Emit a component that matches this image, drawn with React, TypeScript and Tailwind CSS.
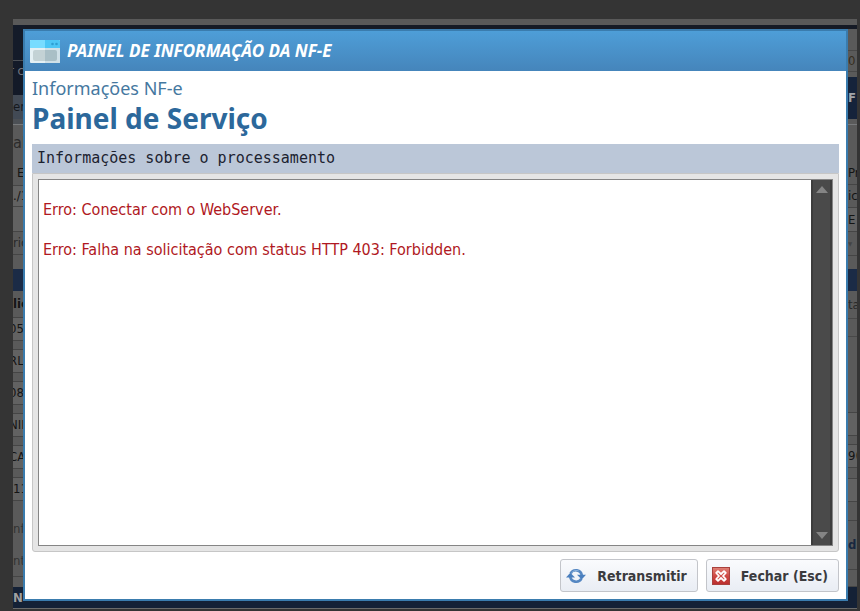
import type { ReactNode } from "react";
import clsx from "clsx";

type StripRow = { size: string; text?: string };

// What is left of the form at both sides of the open panel
const leftRows: StripRow[] = [
  { size: "h-9 bg-[#141b29] border-b border-[#4b4f55]" },
  { size: "h-[34px] bg-[#131a28] text-[#73777f] items-start pt-[2px] -indent-1", text: "r c" },
  { size: "h-6 bg-[#424a55] text-[#15181d]", text: "er" },
  { size: "h-[6px] bg-[#4c5055] border-b border-[#77797b]" },
  { size: "h-9 text-base text-[#2b2b2b]", text: "al" },
  { size: "h-6 pl-1", text: "E" },
  { size: "h-[22px] bg-[#626262] border-y border-[#454545]", text: "./1" },
  { size: "h-6 bg-[#626262]" },
  { size: "h-6 border-y border-[#454545] text-[#292929]", text: "ric" },
  { size: "h-[14px]" },
  { size: "h-[22px] bg-[#1b2b46]" },
  { size: "h-[26px] font-bold", text: "lic" },
  { size: "h-6 bg-[#626262] border-y border-[#454545] -indent-1", text: "05" },
  { size: "h-2" },
  { size: "h-6 bg-[#626262] border-y border-[#454545] -indent-1", text: "RL" },
  { size: "h-2" },
  { size: "h-6 bg-[#626262] border-y border-[#454545] -indent-1", text: "08" },
  { size: "h-2" },
  { size: "h-6 bg-[#626262] border-y border-[#454545] -indent-1", text: "NII" },
  { size: "h-2" },
  { size: "h-6 bg-[#626262] border-y border-[#454545] -indent-1", text: "CA" },
  { size: "h-2" },
  { size: "h-6 bg-[#626262] border-y border-[#454545]", text: "11" },
  { size: "h-3" },
  { size: "h-8 text-[#323232]", text: "nf" },
  { size: "h-8 border-b border-[#454545] text-[#323232]", text: "nt" },
  { size: "h-[10px]" },
  { size: "h-[21px] bg-[#142136] text-[#a0a0a0] font-bold", text: "N" },
];

const rightRows: StripRow[] = [
  { size: "h-1 bg-[#151a25]" },
  { size: "h-[22px] border-b border-[#484848]" },
  { size: "h-5 text-[#362d20]", text: "0" },
  { size: "h-[6px] border-t border-[#484848]" },
  { size: "h-[42px] bg-[#15233b] text-[#a2a5aa] font-bold", text: "F" },
  { size: "h-[6px] border-b border-[#77797b]" },
  { size: "h-9" },
  { size: "h-[23px]", text: "Pr" },
  { size: "h-6 border-y border-[#454545]", text: "ic" },
  { size: "h-6 bg-[#626262] border-b border-[#454545]", text: "E" },
  { size: "h-6 border-b border-[#454545] text-[#444444] text-[6px]", text: "▼" },
  { size: "h-[13px]" },
  { size: "h-[22px] bg-[#1b2b46]" },
  { size: "h-7 border-b border-[#484848] text-[#292929]", text: "ta" },
  { size: "h-[18px] border-b border-[#484848]" },
  { size: "h-[75px]" },
  { size: "h-6 bg-[#626262] border-y border-[#454545]" },
  { size: "h-2" },
  { size: "h-6 bg-[#626262] border-y border-[#454545]", text: "9(" },
  { size: "h-[10px]" },
  { size: "h-6 bg-[#626262] border-y border-[#454545]" },
  { size: "h-[18px]" },
  { size: "h-[50px] border-y border-[#454545] text-[#172740] font-bold", text: "d" },
  { size: "h-[17px] border-b border-[#454545]" },
  { size: "h-[21px] bg-[#142136]" },
];

function Strip({ rows, rowClassName }: { rows: StripRow[]; rowClassName?: string }) {
  return (
    <div className="w-3 overflow-hidden bg-[#5a5a5a]">
      {rows.map((row, i) => (
        <div key={i} className={clsx("flex items-center whitespace-nowrap", rowClassName, row.size)}>
          {row.text}
        </div>
      ))}
    </div>
  );
}

function WindowIcon() {
  return (
    <svg width="30" height="23" viewBox="0 0 30 23" aria-hidden="true">
      <rect width="30" height="23" rx="1" fill="#e4f0f4" />
      <path d="M1 0h14v8H0V1a1 1 0 0 1 1-1z" fill="#78dcff" />
      <path d="M15 0h14a1 1 0 0 1 1 1v7H15z" fill="#4cc6f5" />
      <path d="M15 8h15v14a1 1 0 0 1-1 1H15z" fill="#cfe0e7" />
      <path d="M5 10h10v11H5a2 2 0 0 1-2-2v-7a2 2 0 0 1 2-2z" fill="#c3d2d5" />
      <path d="M15 10h10a2 2 0 0 1 2 2v7a2 2 0 0 1-2 2H15z" fill="#a9bfc6" />
      <circle cx="22.5" cy="4" r="1.3" fill="#2d9fd2" />
      <circle cx="26.5" cy="4" r="1.3" fill="#2d9fd2" />
    </svg>
  );
}

function RefreshIcon() {
  return (
    <svg width="20" height="16" viewBox="0 0 20 16" className="shrink-0" aria-hidden="true">
      <g fill="none" stroke="#5587c2" strokeWidth="2.6">
        <path d="M4.6 5.4A6 6 0 0 1 15.8 7.5" />
        <path d="M15.4 10.6A6 6 0 0 1 4.2 8.5" />
      </g>
      <path d="M0 9.4L4.3 4.8L9 9.4z" fill="#4a7fbe" />
      <path d="M11 6.8H20L15.7 11.4z" fill="#4a7fbe" />
      <path d="M5.6 4.8A5.6 5.6 0 0 1 12.6 2.8" fill="none" stroke="#8db4de" strokeWidth="1" />
    </svg>
  );
}

function CloseIcon() {
  return (
    <svg width="18" height="18" viewBox="0 0 18 18" className="shrink-0" aria-hidden="true">
      <defs>
        <linearGradient id="closeRed" x1="0" y1="0" x2="0" y2="1">
          <stop offset="0" stopColor="#e08277" />
          <stop offset="0.5" stopColor="#cf4944" />
          <stop offset="1" stopColor="#b92d2d" />
        </linearGradient>
      </defs>
      <rect x="0.5" y="0.5" width="17" height="17" fill="url(#closeRed)" stroke="#a9413d" />
      <path
        d="M6 4.2L9 7L12 4.2L13.8 6L11 9L13.8 12L12 13.8L9 11L6 13.8L4.2 12L7 9L4.2 6z"
        fill="#d2544f"
        stroke="#ffffff"
        strokeWidth="1.8"
        strokeLinejoin="round"
      />
    </svg>
  );
}

function PanelButton({ icon, children }: { icon: ReactNode; children: ReactNode }) {
  return (
    <button
      type="button"
      className="flex h-[33px] items-center gap-[11px] rounded-[3px] border border-[#c3c5ca] bg-linear-to-b from-[#fafbfd] to-[#e9edf4] px-[5px] pr-[10px] font-['DejaVu_Sans_Condensed','DejaVu_Sans',sans-serif] text-sm font-bold text-[#3b3b3e]"
    >
      {icon}
      {children}
    </button>
  );
}

export default function App() {
  return (
    <main className="relative min-h-screen overflow-hidden bg-[#343434] pl-[13px] pr-[3px] pt-[19px] font-['Noto_Sans',sans-serif]">
      {/* Dimmed page */}
      <div
        aria-hidden="true"
        className="border-b border-[#6a6a6a] font-['DejaVu_Sans_Condensed','DejaVu_Sans',sans-serif] text-[13px] leading-4 text-[#141414]"
      >
        <div className="h-[6px] bg-[#595959]" />
        <div className="flex justify-between bg-[#151a25]">
          <Strip rows={leftRows} />
          <div className="mt-auto h-[21px] grow bg-[#142136]" />
          <Strip rows={rightRows} rowClassName="pl-[3px]" />
        </div>
      </div>

      {/* Panel */}
      <section
        role="dialog"
        aria-labelledby="panel-title"
        className="absolute inset-x-0 top-[29px] bottom-[10px] ml-[23px] mr-3 flex flex-col border-2 border-[#3a7cae] bg-white"
      >
        <header className="flex h-10 shrink-0 items-center gap-[7px] bg-linear-to-b from-[#4e9ed8] to-[#4585bb] pl-[5px]">
          <WindowIcon />
          <h1 id="panel-title" className="text-[17px] font-bold italic text-white">
            PAINEL DE INFORMAÇÃO DA NF-E
          </h1>
        </header>

        <div className="flex min-h-0 grow flex-col px-[7px] pb-[7px]">
          <p className="pt-[5px] text-lg leading-6 text-[#45789f]">Informações NF-e</p>
          <h2 className="text-[28px] font-bold leading-9 text-[#2c689b]">Painel de Serviço</h2>
          <label
            htmlFor="log"
            className="mt-2 h-[29px] shrink-0 bg-[#bbc7d8] pl-[5px] font-['DejaVu_Sans_Mono',monospace] text-[15px] leading-[29px] text-[#1c2230]"
          >
            Informações sobre o processamento
          </label>

          <div className="flex min-h-0 grow rounded-b-[3px] border border-[#c6c6c6] bg-[#e5e5e5] p-[5px]">
            <div className="flex grow border border-[#858585] bg-white">
              <textarea
                id="log"
                readOnly
                className="block grow resize-none overflow-hidden bg-white px-1 font-['DejaVu_Sans_Condensed','DejaVu_Sans',sans-serif] text-base leading-5 text-[#b01822] outline-none"
                defaultValue={
                  "\nErro: Conectar com o WebServer.\n\nErro: Falha na solicitação com status HTTP 403: Forbidden."
                }
              />
              <div className="flex w-[21px] flex-col items-center justify-between border-x-2 border-[#3d3d3d] bg-[#4a4a4a] py-[6px]">
                <svg width="12" height="7" viewBox="0 0 12 7" aria-hidden="true">
                  <path d="M0 7l6-7 6 7z" fill="#858585" />
                </svg>
                <svg width="12" height="7" viewBox="0 0 12 7" aria-hidden="true">
                  <path d="M0 0h12L6 7z" fill="#858585" />
                </svg>
              </div>
            </div>
          </div>

          <div className="mt-[7px] flex shrink-0 justify-end gap-2">
            <PanelButton icon={<RefreshIcon />}>Retransmitir</PanelButton>
            <PanelButton icon={<CloseIcon />}>Fechar (Esc)</PanelButton>
          </div>
        </div>
      </section>
    </main>
  );
}
